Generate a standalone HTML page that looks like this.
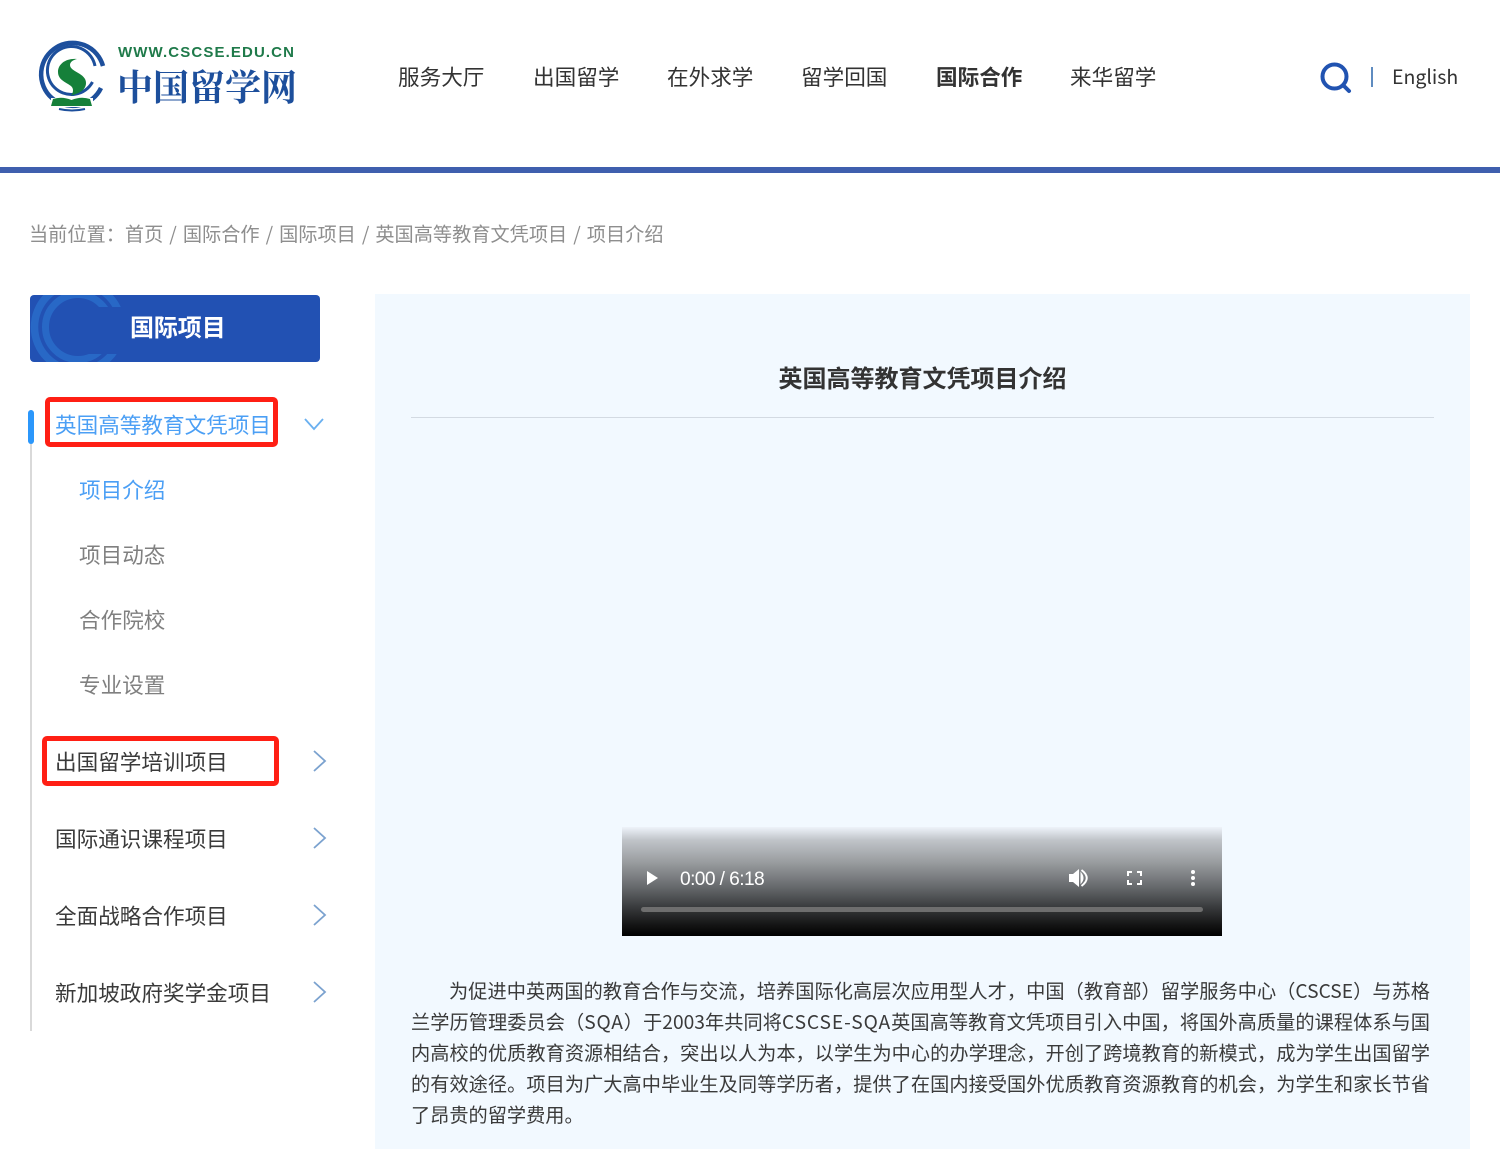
<!DOCTYPE html>
<html lang="zh-CN"><head><meta charset="utf-8"><title>项目介绍</title>
<style>
html,body{margin:0;padding:0;background:#fff}
body{width:1500px;height:1149px;position:relative;overflow:hidden;font-family:"Noto Sans CJK SC","Liberation Sans",sans-serif;color:#333}
.a{position:absolute;white-space:nowrap}
.nav{top:61px;font-size:21.6px;line-height:32px;color:#333;font-weight:400}
.side{left:55px;font-size:21.6px;line-height:32px;color:#3a3a3a;font-weight:400}
.sub{left:79px;font-size:21.6px;line-height:32px;color:#808080;font-weight:400}
.red{position:absolute;border:5px solid #ff1f14;border-radius:5px;box-sizing:border-box}
.p{position:absolute;left:411px;width:1019px;font-size:19.2px;line-height:31px;height:31px;color:#3a3a3a;font-weight:400;text-align:justify;text-align-last:justify;white-space:nowrap}
</style></head><body>

<svg class="a" style="left:36px;top:38px" width="72" height="76" viewBox="0 0 72 76">
<path d="M67 28A31.500 31.500 0 1 0 65 50" fill="none" stroke="#1d4f9c" stroke-width="4.500"/>
<path d="M59 28A24 24 0 1 0 56.500 44" fill="none" stroke="#1d4f9c" stroke-width="3"/>
<path d="M41 21C30 20 22 26 22 34C22 45 37 45 37 52C37 54 36.500 56 35 57.500C45 55 50 51 50 45C50 35 34 34 34 27C34 24 37 22 41 21Z" fill="#15803a"/>
<rect x="15" y="60" width="42" height="9" fill="#fff"/>
<path d="M17 61Q26 58 35.500 62Q45 58 54 61L56 68H15Z" fill="#15803a"/>
<path d="M23 71Q36 74 49 71" fill="none" stroke="#1d4f9c" stroke-width="2"/>
</svg>
<div class="a" style="left:118px;top:44px;font:bold 15px/18px 'Liberation Sans',sans-serif;letter-spacing:1.120px;color:#1f7a4a">WWW.CSCSE.EDU.CN</div>
<div class="a" style="left:117px;top:61px;font:bold 36px/50px 'Noto Serif CJK SC',serif;color:#1d4f9c">中国留学网</div>

<div class="a nav" style="left:398px">服务大厅</div>
<div class="a nav" style="left:533px">出国留学</div>
<div class="a nav" style="left:667px">在外求学</div>
<div class="a nav" style="left:801px">留学回国</div>
<div class="a nav" style="left:936px;font-weight:700">国际合作</div>
<div class="a nav" style="left:1070px">来华留学</div>

<svg class="a" style="left:1319px;top:60px" width="34" height="34" viewBox="0 0 34 34"><circle cx="15.500" cy="16.500" r="12" fill="none" stroke="#2153b1" stroke-width="4"/><path d="M25 26L30 31" stroke="#2153b1" stroke-width="4" stroke-linecap="round"/></svg>
<div class="a" style="left:1371px;top:67px;width:1.500px;height:20px;background:#5f8cc0"></div>
<div class="a" style="left:1392px;top:61px;font-size:19.500px;line-height:30px;color:#333;letter-spacing:0;font-weight:400">English</div>

<div class="a" style="left:0;top:167px;width:1500px;height:6px;background:#3f5fae"></div>

<div class="a" style="left:29px;top:218px;font-size:19.2px;line-height:30px;color:#8e8e8e;font-weight:400;word-spacing:1.700px">当前位置：首页 / 国际合作 / 国际项目 / 英国高等教育文凭项目 / 项目介绍</div>

<div class="a" style="left:30px;top:295px;width:290px;height:67px;background:#2251b3;border-radius:4px;overflow:hidden">
<svg width="110" height="67" viewBox="0 0 110 67" style="position:absolute;left:0;top:0">
<circle cx="48" cy="32" r="43.500" fill="none" stroke="#2868c6" stroke-width="7.500"/>
<circle cx="48" cy="32" r="32.500" fill="none" stroke="#2868c6" stroke-width="7"/>
<rect x="48" y="12" width="62" height="47" fill="#2251b3"/>
</svg>
<div class="a" style="left:100px;top:13px;width:94px;font-size:24px;line-height:36px;font-weight:700;color:#fff;letter-spacing:-.1px">国际项目</div>
</div>

<div class="a" style="left:30px;top:410px;width:1.500px;height:621px;background:#d9d9d9"></div>
<div class="a" style="left:28px;top:410px;width:6px;height:34px;background:#2b97fb;border-radius:3px"></div>

<div class="red" style="left:45px;top:397px;width:233px;height:50px"></div>
<div class="a side" style="top:409px;color:#4b9ff5">英国高等教育文凭项目</div>
<svg class="a" style="left:302px;top:417px" width="24" height="16"><path d="M3 2L12 12L21 2" fill="none" stroke="#6ab0f0" stroke-width="1.800"/></svg>

<div class="a sub" style="top:474px;color:#4b9ff5">项目介绍</div>
<div class="a sub" style="top:539px">项目动态</div>
<div class="a sub" style="top:604px">合作院校</div>
<div class="a sub" style="top:669px">专业设置</div>

<div class="red" style="left:42px;top:736px;width:237px;height:50px"></div>
<div class="a side" style="top:746px">出国留学培训项目</div>
<div class="a side" style="top:823px">国际通识课程项目</div>
<div class="a side" style="top:900px">全面战略合作项目</div>
<div class="a side" style="top:977px">新加坡政府奖学金项目</div>
<svg class="a" style="left:312px;top:749px" width="16" height="24"><path d="M2 2L13 12L2 22" fill="none" stroke="#7ba2cf" stroke-width="1.800"/></svg>
<svg class="a" style="left:312px;top:826px" width="16" height="24"><path d="M2 2L13 12L2 22" fill="none" stroke="#7ba2cf" stroke-width="1.800"/></svg>
<svg class="a" style="left:312px;top:903px" width="16" height="24"><path d="M2 2L13 12L2 22" fill="none" stroke="#7ba2cf" stroke-width="1.800"/></svg>
<svg class="a" style="left:312px;top:980px" width="16" height="24"><path d="M2 2L13 12L2 22" fill="none" stroke="#7ba2cf" stroke-width="1.800"/></svg>

<div class="a" style="left:375px;top:294px;width:1095px;height:855px;background:#f2f9ff"></div>
<div class="a" style="left:375px;top:359px;width:1095px;text-align:center;font-size:24px;line-height:36px;font-weight:700;color:#333">英国高等教育文凭项目介绍</div>
<div class="a" style="left:411px;top:417px;width:1023px;height:1px;background:#d3dae2"></div>

<div class="a" style="left:622px;top:827px;width:600px;height:109px;background:linear-gradient(to bottom,#eef3fa 0%,#c0c4c9 12%,#9a9da0 32%,#66696c 55%,#353739 75%,#141414 90%,#000 100%)"></div>
<svg class="a" style="left:622px;top:827px" width="600" height="109">
<path d="M25 44V58L36 51Z" fill="#fff"/>
<path d="M447 47H451L457 42V60L451 55H447Z" fill="#fff"/>
<path d="M459 46Q463 51 459 56Z" fill="#fff" stroke="#fff"/>
<path d="M459.500 43Q470 51 459.500 59" fill="none" stroke="#fff" stroke-width="2"/>
<path d="M506 49V45H510M515 45H519V49M519 53V57H515M510 57H506V53" fill="none" stroke="#fff" stroke-width="2"/>
<circle cx="571" cy="45" r="2" fill="#fff"/><circle cx="571" cy="51" r="2" fill="#fff"/><circle cx="571" cy="57" r="2" fill="#fff"/>
<rect x="19" y="80" width="562" height="5" rx="2.500" fill="#6e6e6e"/>
</svg>
<div class="a" style="left:680px;top:865px;font:19.2px/30px 'Liberation Sans',sans-serif;letter-spacing:-.6px;color:#fff">0:00 / 6:18</div>

<div class="p" style="top:975px;left:449px;width:981px">为促进中英两国的教育合作与交流，培养国际化高层次应用型人才，中国（教育部）留学服务中心（CSCSE）与苏格</div>
<div class="p" style="top:1006px">兰学历管理委员会（<span style="letter-spacing:.8px">SQA</span>）于2003年共同将<span style="letter-spacing:.9px">CSCSE-SQA</span>英国高等教育文凭项目引入中国，将国外高质量的课程体系与国</div>
<div class="p" style="top:1037px">内高校的优质教育资源相结合，突出以人为本，以学生为中心的办学理念，开创了跨境教育的新模式，成为学生出国留学</div>
<div class="p" style="top:1068px">的有效途径。项目为广大高中毕业生及同等学历者，提供了在国内接受国外优质教育资源教育的机会，为学生和家长节省</div>
<div class="p" style="top:1099px;text-align-last:left">了昂贵的留学费用。</div>

</body></html>
